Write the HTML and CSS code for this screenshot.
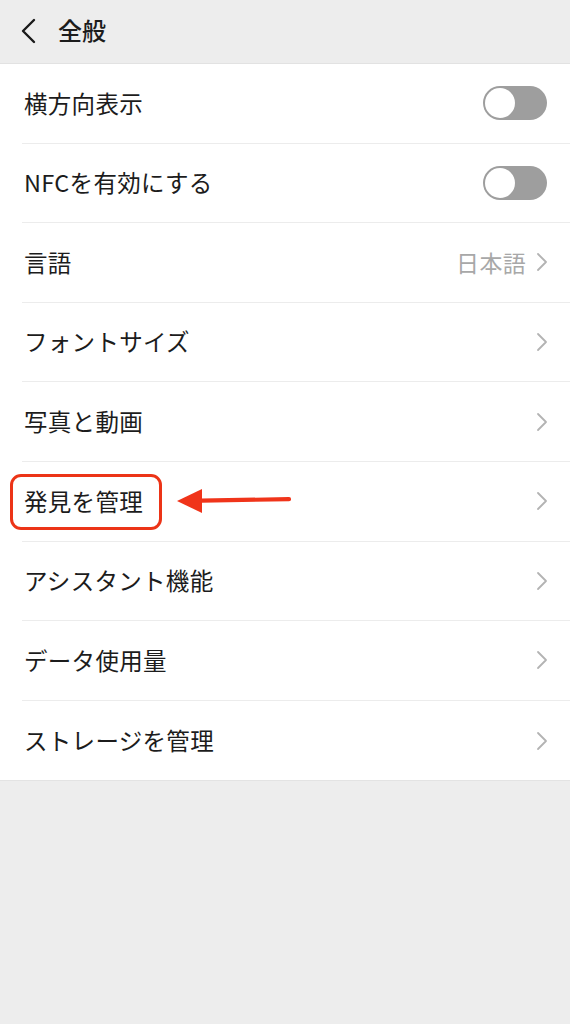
FILE: index.html
```html
<!DOCTYPE html>
<html lang="ja">
<head>
<meta charset="utf-8">
<link rel="stylesheet" href="styles.css">
</head>
<body>
<div class="page">
  <header class="topbar">
    <svg class="back" width="16" height="26" viewBox="0 0 16 26"><path d="M14 2 L3 13 L14 24" fill="none" stroke="#1a1a1a" stroke-width="2.4" stroke-linecap="round" stroke-linejoin="round"/></svg>
    <span class="title">全般</span>
  </header>
  <ul class="list">
    <li class="row"><span class="label">横方向表示</span><span class="toggle"><span class="knob"></span></span></li>
    <li class="row"><span class="label">NFCを有効にする</span><span class="toggle"><span class="knob"></span></span></li>
    <li class="row"><span class="label">言語</span><span class="right"><span class="value">日本語</span><svg class="chev" width="12" height="20" viewBox="0 0 12 20"><path d="M2 2 L10 10 L2 18" fill="none" stroke="#b3b3b3" stroke-width="1.8" stroke-linecap="round" stroke-linejoin="round"/></svg></span></li>
    <li class="row"><span class="label">フォントサイズ</span><span class="right"><svg class="chev" width="12" height="20" viewBox="0 0 12 20"><path d="M2 2 L10 10 L2 18" fill="none" stroke="#b3b3b3" stroke-width="1.8" stroke-linecap="round" stroke-linejoin="round"/></svg></span></li>
    <li class="row"><span class="label">写真と動画</span><span class="right"><svg class="chev" width="12" height="20" viewBox="0 0 12 20"><path d="M2 2 L10 10 L2 18" fill="none" stroke="#b3b3b3" stroke-width="1.8" stroke-linecap="round" stroke-linejoin="round"/></svg></span></li>
    <li class="row highlighted"><span class="label">発見を管理</span><span class="right"><svg class="chev" width="12" height="20" viewBox="0 0 12 20"><path d="M2 2 L10 10 L2 18" fill="none" stroke="#b3b3b3" stroke-width="1.8" stroke-linecap="round" stroke-linejoin="round"/></svg></span>
      <span class="redbox"></span>
      <svg class="arrow" width="116" height="28" viewBox="0 0 116 28"><path d="M24 12.6 L112 11.2" stroke="#f0341a" stroke-width="4.2" stroke-linecap="round"/><polygon points="0,13 25,1 25,25" fill="#f0341a"/></svg>
    </li>
    <li class="row"><span class="label">アシスタント機能</span><span class="right"><svg class="chev" width="12" height="20" viewBox="0 0 12 20"><path d="M2 2 L10 10 L2 18" fill="none" stroke="#b3b3b3" stroke-width="1.8" stroke-linecap="round" stroke-linejoin="round"/></svg></span></li>
    <li class="row"><span class="label">データ使用量</span><span class="right"><svg class="chev" width="12" height="20" viewBox="0 0 12 20"><path d="M2 2 L10 10 L2 18" fill="none" stroke="#b3b3b3" stroke-width="1.8" stroke-linecap="round" stroke-linejoin="round"/></svg></span></li>
    <li class="row"><span class="label">ストレージを管理</span><span class="right"><svg class="chev" width="12" height="20" viewBox="0 0 12 20"><path d="M2 2 L10 10 L2 18" fill="none" stroke="#b3b3b3" stroke-width="1.8" stroke-linecap="round" stroke-linejoin="round"/></svg></span></li>
  </ul>
</div>
</body>
</html>
```
FILE: styles.css
```css
* { box-sizing: border-box; }
html, body { margin: 0; padding: 0; }
body {
  background: #ededed;
  font-family: "Noto Sans CJK JP", "Noto Sans", sans-serif;
  color: #1c1c1c;
  width: 570px;
  height: 1024px;
  overflow: hidden;
}
.page { width: 570px; }
.topbar {
  height: 64px;
  background: #ededed;
  display: flex;
  align-items: center;
  padding-left: 20px;
  gap: 22px;
  border-bottom: 1px solid #e2e2e2;
}
.back { display: block; margin-top: -2px; }
.title { font-size: 24px; font-weight: 500; line-height: 1; margin-top: -3px; }
.list {
  list-style: none;
  margin: 0;
  padding: 0 0 0 22px;
  background: #fff;
  border-bottom: 1px solid #e3e3e3;
}
.row {
  position: relative;
  height: 79.6px;
  display: flex;
  align-items: center;
  justify-content: space-between;
  padding-left: 2px;
  padding-right: 22px;
  border-bottom: 1px solid #ececec;
}
.row:last-child { border-bottom: none; }
.label { font-size: 23.5px; line-height: 1; letter-spacing: 0.3px; }
.right { display: flex; align-items: center; gap: 10px; }
.value { font-size: 23px; color: #a8a8a8; line-height: 1; letter-spacing: 0.3px; }
.chev { display: block; }
.toggle {
  width: 64px;
  height: 34px;
  border-radius: 17px;
  background: #9e9e9e;
  display: flex;
  align-items: center;
  padding-left: 2px;
  margin-right: 1px;
}
.knob {
  width: 30px;
  height: 30px;
  border-radius: 50%;
  background: #fff;
}
.redbox {
  position: absolute;
  left: -12px;
  top: 12px;
  width: 152px;
  height: 56px;
  border: 3.5px solid #ec3417;
  border-radius: 11px;
}
.arrow {
  position: absolute;
  left: 155px;
  top: 26px;
}
```
